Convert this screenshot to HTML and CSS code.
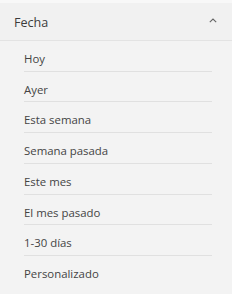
FILE: index.html
```html
<!DOCTYPE html>
<html>
<head>
  <meta charset="UTF-8">
  <title>Fecha</title>
  <link rel="stylesheet" href="styles.css">
</head>
<body>
  <div class="filter-panel">
    <div class="filter-header">
      <span class="filter-title">Fecha</span>
      <svg class="chevron" width="8" height="5" viewBox="0 0 8 5">
        <path d="M0.8 4.2 L4 1 L7.2 4.2" fill="none" stroke="#666" stroke-width="1.1"/>
      </svg>
    </div>
    <ul class="filter-list">
      <li class="filter-item">Hoy</li>
      <li class="filter-item">Ayer</li>
      <li class="filter-item">Esta semana</li>
      <li class="filter-item">Semana pasada</li>
      <li class="filter-item">Este mes</li>
      <li class="filter-item">El mes pasado</li>
      <li class="filter-item">1-30 días</li>
      <li class="filter-item">Personalizado</li>
    </ul>
  </div>
</body>
</html>
```

FILE: styles.css
```css
body {
  margin: 0;
  padding: 0;
  background: #f3f3f3;
  font-family: 'Open Sans', 'Noto Sans', sans-serif;
  color: #444;
}
.filter-panel {
  width: 232px;
  height: 294px;
  border-top: 3px solid #f8f8f8;
  box-sizing: border-box;
  overflow: hidden;
}
.filter-header {
  display: flex;
  align-items: center;
  justify-content: space-between;
  height: 37px;
  padding: 0 15px 0 14px;
  background: #f1f1f1;
  border-bottom: 1px solid #e3e3e3;
}
.filter-title {
  font-size: 12.6px;
  color: #3c3c3c;
  padding-top: 2px;
}
.chevron {
  display: block;
  margin-top: -3px;
}
.filter-list {
  list-style: none;
  margin: 0;
  padding: 0 20px 0 24px;
}
.filter-item {
  padding: 9px 0 3px;
  line-height: 17.7px;
  font-size: 11.4px;
  color: #444;
  border-bottom: 1px solid #e0e0e0;
}
.filter-item:last-child {
  border-bottom: none;
}
```
